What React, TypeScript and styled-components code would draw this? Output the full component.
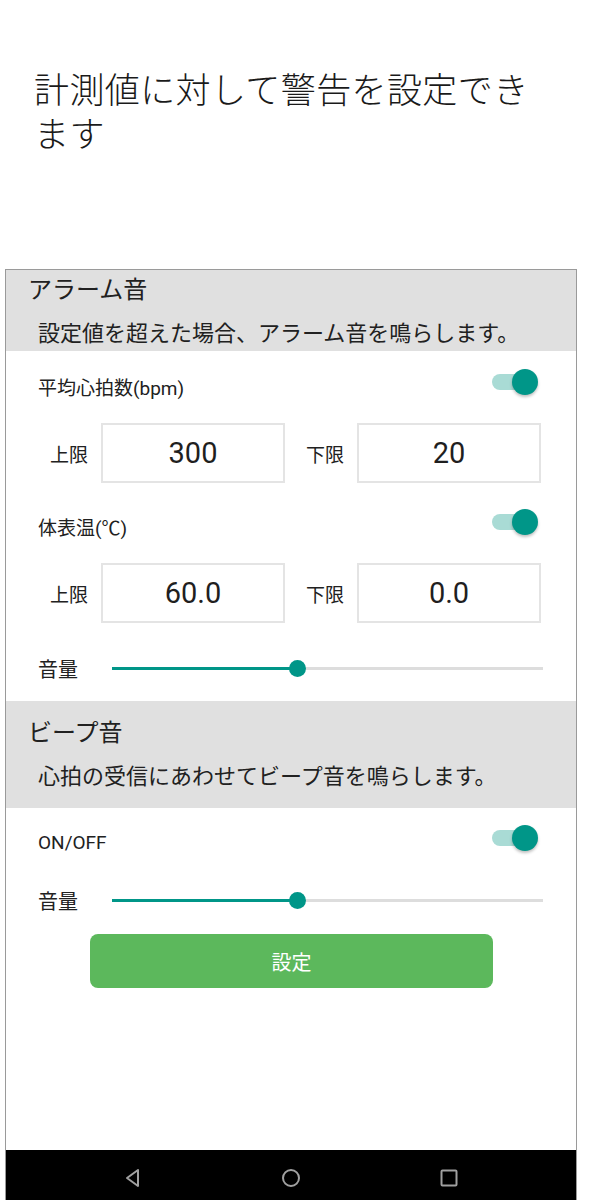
import React from 'react';
import styled, { createGlobalStyle } from 'styled-components';

const GlobalStyle = createGlobalStyle`
  html, body {
    margin: 0;
    padding: 0;
    background: #ffffff;
  }
  body {
    font-family: Roboto, "Noto Sans CJK JP", sans-serif;
    color: #212121;
  }
`;

const Page = styled.div`
  width: 600px;
  height: 1200px;
  display: flex;
  flex-direction: column;
  overflow: hidden;
`;

const Heading = styled.h1`
  margin: 0;
  padding: 66px 0 0 34px;
  width: 540px;
  height: 269px;
  flex-shrink: 0;
  box-sizing: border-box;
  font-family: "Noto Sans CJK JP", sans-serif;
  font-weight: 300;
  font-size: 35px;
  line-height: 44px;
  letter-spacing: 0.4px;
  color: #1a1a1a;
`;

const Phone = styled.div`
  margin-left: 5px;
  width: 572px;
  flex: 1;
  box-sizing: border-box;
  border: 1px solid #9a9a9a;
  border-bottom: none;
  display: flex;
  flex-direction: column;
`;

const Band = styled.div<{ $tall?: boolean }>`
  background: #e0e0e0;
  height: ${({ $tall }) => ($tall ? 107 : 81)}px;
  box-sizing: border-box;
  padding-top: ${({ $tall }) => ($tall ? 12 : 0)}px;
  font-family: "Noto Sans CJK JP", sans-serif;
`;

const BandTitle = styled.div`
  padding-left: 22px;
  height: 36px;
  line-height: 36px;
  font-size: 24px;
  color: #212121;
`;

const BandText = styled.div`
  margin-top: 7px;
  padding-left: 32px;
  height: 36px;
  line-height: 36px;
  font-size: 22px;
  color: #212121;
`;

const ToggleRow = styled.div<{ $top: number }>`
  margin-top: ${({ $top }) => $top}px;
  height: 44px;
  padding: 0 38px 0 32px;
  display: flex;
  align-items: center;
  justify-content: space-between;
`;

const Label = styled.span`
  padding-top: 8px;
  font-size: 19px;
  color: #212121;
`;

const Switch = styled.div`
  position: relative;
  width: 46px;
  height: 26px;
`;

const SwitchTrack = styled.div`
  position: absolute;
  left: 0;
  top: 5px;
  width: 42px;
  height: 16px;
  border-radius: 8px;
  background: #a9dbd5;
`;

const SwitchThumb = styled.div`
  position: absolute;
  right: 0;
  top: 0;
  width: 26px;
  height: 26px;
  border-radius: 50%;
  background: #009688;
  box-shadow: 0 2px 3px rgba(0, 0, 0, 0.25);
`;

const LimitRow = styled.div<{ $top: number }>`
  margin-top: ${({ $top }) => $top}px;
  padding-left: 44px;
  display: flex;
  align-items: center;
  height: 60px;
`;

const LimitLabel = styled.span<{ $gap?: number }>`
  margin-left: ${({ $gap }) => $gap ?? 0}px;
  width: 51px;
  font-size: 19px;
  color: #212121;
`;

const ValueBox = styled.div`
  width: 184px;
  height: 60px;
  box-sizing: border-box;
  border: 2px solid #e4e4e4;
  display: flex;
  align-items: center;
  justify-content: center;
  font-size: 29px;
  color: #1f1f1f;
`;

const VolumeRow = styled.div<{ $top: number }>`
  margin-top: ${({ $top }) => $top}px;
  height: 30px;
  padding: 0 33px 0 32px;
  display: flex;
  align-items: center;
`;

const VolumeLabel = styled.span`
  width: 74px;
  font-size: 20px;
  font-family: "Noto Sans CJK JP", sans-serif;
  color: #212121;
`;

const Track = styled.div`
  position: relative;
  flex: 1;
  height: 3px;
  background: #dddddd;
`;

const TrackFill = styled.div`
  height: 100%;
  background: #009688;
`;

const Knob = styled.div`
  position: absolute;
  top: 50%;
  width: 17px;
  height: 17px;
  margin: -8.5px 0 0 -8.5px;
  border-radius: 50%;
  background: #009688;
`;

const SubmitButton = styled.button`
  margin: 19px 0 0 84px;
  width: 403px;
  height: 54px;
  border: none;
  border-radius: 8px;
  background: #5cb85c;
  color: #ffffff;
  font-family: "Noto Sans CJK JP", sans-serif;
  font-size: 20px;
  padding: 0;
`;

const Spacer = styled.div`
  flex: 1;
`;

const NavBar = styled.div`
  height: 50px;
  background: #000000;
  display: grid;
  grid-template-columns: repeat(3, 158px);
  justify-content: center;
  align-items: center;
  justify-items: center;
`;

const NavIcon = styled.svg`
  width: 20px;
  height: 20px;
  margin-top: 6px;
  fill: none;
  stroke: #a0a0a0;
  stroke-width: 2;
`;

const Toggle: React.FC = () => (
  <Switch>
    <SwitchTrack />
    <SwitchThumb />
  </Switch>
);

const Volume: React.FC<{ top: number; value: number }> = ({ top, value }) => (
  <VolumeRow $top={top}>
    <VolumeLabel>音量</VolumeLabel>
    <Track>
      <TrackFill style={{ width: `${value * 100}%` }} />
      <Knob style={{ left: `${value * 100}%` }} />
    </Track>
  </VolumeRow>
);

const Limits: React.FC<{ top: number; upper: string; lower: string }> = ({ top, upper, lower }) => (
  <LimitRow $top={top}>
    <LimitLabel>上限</LimitLabel>
    <ValueBox>{upper}</ValueBox>
    <LimitLabel $gap={21}>下限</LimitLabel>
    <ValueBox>{lower}</ValueBox>
  </LimitRow>
);

export default function App() {
  return (
    <Page>
      <GlobalStyle />
      <Heading>計測値に対して警告を設定できます</Heading>
      <Phone>
        <Band>
          <BandTitle>アラーム音</BandTitle>
          <BandText>設定値を超えた場合、アラーム音を鳴らします。</BandText>
        </Band>

        <ToggleRow $top={9}>
          <Label>平均心拍数(bpm)</Label>
          <Toggle />
        </ToggleRow>
        <Limits top={19} upper="300" lower="20" />

        <ToggleRow $top={17}>
          <Label>体表温(℃)</Label>
          <Toggle />
        </ToggleRow>
        <Limits top={19} upper="60.0" lower="0.0" />

        <Volume top={30} value={0.43} />

        <Band $tall style={{ marginTop: 18 }}>
          <BandTitle>ビープ音</BandTitle>
          <BandText>心拍の受信にあわせてビープ音を鳴らします。</BandText>
        </Band>

        <ToggleRow $top={8}>
          <Label>ON/OFF</Label>
          <Toggle />
        </ToggleRow>
        <Volume top={25} value={0.43} />

        <SubmitButton>設定</SubmitButton>
        <Spacer />

        <NavBar>
          <NavIcon viewBox="0 0 20 20">
            <path d="M15 2 L4 10 L15 18 Z" strokeLinejoin="round" />
          </NavIcon>
          <NavIcon viewBox="0 0 20 20">
            <circle cx="10" cy="10" r="8" />
          </NavIcon>
          <NavIcon viewBox="0 0 20 20">
            <rect x="2.5" y="2.5" width="15" height="15" rx="1" />
          </NavIcon>
        </NavBar>
      </Phone>
    </Page>
  );
}
